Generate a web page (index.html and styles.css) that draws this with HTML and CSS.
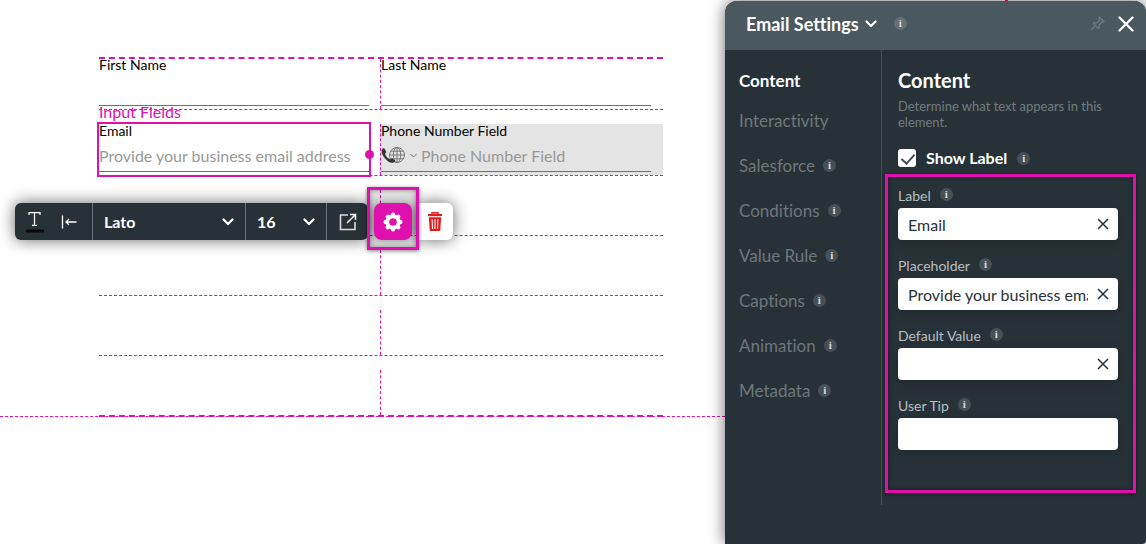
FILE: index.html
```html
<!DOCTYPE html>
<html lang="en">
<head>
<meta charset="utf-8">
<title>Email Settings</title>
<link rel="stylesheet" href="styles.css">
</head>
<body>
<svg class="sprite" aria-hidden="true">
  <symbol id="chevron" viewBox="0 0 12 8"><path d="M1.5 1.5 6 6l4.500-4.500" fill="none" stroke="currentColor" stroke-width="2.200" stroke-linecap="round" stroke-linejoin="round"/></symbol>
  <symbol id="cross" viewBox="0 0 16 16"><path d="M1.500 1.500l13 13M14.500 1.500l-13 13" fill="none" stroke="currentColor" stroke-width="2.400" stroke-linecap="round"/></symbol>
  <symbol id="cross-thin" viewBox="0 0 12 12"><path d="M1 1l10 10M11 1 1 11" fill="none" stroke="currentColor" stroke-width="1.500"/></symbol>
</svg>
<div class="app">
  <main class="canvas">
    <form class="form-grid">
      <div class="row row-first">
        <div class="cell">
          <label for="first">First Name</label>
          <input id="first" class="line-input" type="text">
        </div>
        <div class="cell">
          <label for="last">Last Name</label>
          <input id="last" class="line-input" type="text">
        </div>
      </div>
      <div class="row row-second">
        <span class="section-tag">Input Fields</span>
        <div class="cell selected">
          <label for="mail">Email</label>
          <input id="mail" class="line-input" type="email" placeholder="Provide your business email address">
          <span class="handle"></span>
        </div>
        <div class="cell shaded">
          <label for="phone">Phone Number Field</label>
          <div class="phone">
            <svg class="phone-icon" viewBox="0 0 38 17" aria-hidden="true">
              <g fill="none" stroke="#777" stroke-width="1"><circle cx="16" cy="8" r="7.500"/><ellipse cx="16" cy="8" rx="3.700" ry="7.500"/><path d="M16 .5v15M8.500 8h15M10 4.200h12M10 11.800h12"/></g>
              <path d="M1.200 1.800C2.300.7 3.300.8 4 2l1.200 2.200c.4.800.2 1.500-.7 2.200-.4 2 2.900 5.700 5 5.300.8-.8 1.400-1 2.200-.5l2 1.400c1 .7 1 1.600.1 2.500-1.700 1.600-4.500 1.200-7.500-1.200C2.700 11-1.500 5 1.200 1.800z" fill="#333" stroke="#e4e4e4" stroke-width=".5"/>
              <path d="M29.500 7l3 3 3-3" fill="none" stroke="#777"/>
            </svg>
            <input id="phone" class="line-input" type="tel" placeholder="Phone Number Field">
          </div>
        </div>
      </div>
      <div class="row"><div class="cell"></div><div class="cell"></div></div>
      <div class="row"><div class="cell"></div><div class="cell"></div></div>
      <div class="row"><div class="cell"></div><div class="cell"></div></div>
      <div class="row row-last"><div class="cell"></div><div class="cell"></div></div>
    </form>
    <div class="page-line"></div>

    <div class="toolbar" role="toolbar" aria-label="Text tools">
      <div class="tools">
        <div class="tool-group">
          <button class="tool" type="button" aria-label="Text colour">
            <svg width="20" height="22" viewBox="0 0 20 22"><g fill="none" stroke="#fff" stroke-width="1.200"><path d="M4 4V1.600h11V4M9.500 1.600v12.800M7 14.400h5"/></g><path d="M1 18.500h18v3H1z" fill="#080a0b"/></svg>
          </button>
          <button class="tool" type="button" aria-label="Align left">
            <svg width="16" height="14" viewBox="0 0 16 14"><path d="M1.500.5v13M5 7h10.500M8 4 5 7l3 3" fill="none" stroke="#fff" stroke-width="1.300"/></svg>
          </button>
        </div>
        <div class="picker picker-font">
          <select aria-label="Font"><option>Lato</option></select>
          <svg class="chev"><use href="#chevron"/></svg>
        </div>
        <div class="picker picker-size">
          <select aria-label="Font size"><option>16</option></select>
          <svg class="chev"><use href="#chevron"/></svg>
        </div>
        <button class="tool tool-open" type="button" aria-label="Open">
          <svg width="18" height="18" viewBox="0 0 18 18"><path d="M9 2H1.500v14.500H16V9" fill="none" stroke="#ddd" stroke-width="1.600"/><path d="M8 10l8-8M11 1.500h5.500V7" fill="none" stroke="#fff" stroke-width="1.500"/></svg>
        </button>
      </div>
      <div class="gear-frame">
        <button class="gear" type="button" aria-label="Settings">
          <svg width="20" height="20" viewBox="0 0 20 20"><circle cx="10" cy="10" r="5.600" fill="none" stroke="#fff" stroke-width="4"/><g stroke="#fff" stroke-width="4.400" stroke-linecap="round"><path d="M10 2.700v.8M10 16.500v.8M2.700 10h.8M16.500 10h.8M4.800 4.800l.5.500M14.700 14.700l.5.500M15.200 4.800l-.5.500M5.300 14.700l-.5.500"/></g><circle cx="10" cy="10" r="3.600" fill="#e010ae"/></svg>
        </button>
      </div>
      <button class="trash" type="button" aria-label="Delete">
        <svg width="16" height="20" viewBox="0 0 16 20"><path d="M5 2V.7h6V2" fill="none" stroke="#e02020" stroke-width="1.400"/><path d="M1 2h14v2.200H1z" fill="#e02020"/><path d="M1.800 5.200h12.400L13.200 19H2.800z" fill="#e02020"/><path d="M5.100 7l.4 10M8 7v10M10.900 7l-.4 10" stroke="#fff" stroke-width="1"/></svg>
      </button>
    </div>
  </main>

  <aside class="panel">
    <header class="panel-head">
      <h1>Email Settings</h1>
      <svg class="chev"><use href="#chevron"/></svg>
      <span class="info">i</span>
      <button class="icon-btn pin" type="button" aria-label="Pin">
        <svg width="15" height="15" viewBox="0 0 15 15"><path d="M9.500 1l4.500 4.500-1.200.8-.7-.2-2.900 2.900.2 2.500-1 1L3.500 7.600l1-1 2.500.2L9.900 3.900l-.9-1.600zM5.500 9.500.8 14.200" fill="none" stroke="#6d787e" stroke-width="1.300"/></svg>
      </button>
      <button class="icon-btn" type="button" aria-label="Close"><svg width="16" height="16"><use href="#cross"/></svg></button>
    </header>
    <div class="panel-body">
      <nav class="tabs">
        <a class="current" href="#content">Content</a>
        <a href="#interactivity">Interactivity</a>
        <a href="#salesforce">Salesforce <span class="info">i</span></a>
        <a href="#conditions">Conditions <span class="info">i</span></a>
        <a href="#value-rule">Value Rule <span class="info">i</span></a>
        <a href="#captions">Captions <span class="info">i</span></a>
        <a href="#animation">Animation <span class="info">i</span></a>
        <a href="#metadata">Metadata <span class="info">i</span></a>
      </nav>
      <section class="content" id="content">
        <h2>Content</h2>
        <p>Determine what text appears in this element.</p>
        <div class="check">
          <input id="show" type="checkbox" checked>
          <label for="show">Show Label</label>
          <span class="info">i</span>
        </div>
        <div class="fields">
          <div class="field">
            <div class="field-head"><label for="f-label">Label</label><span class="info">i</span></div>
            <div class="box"><input id="f-label" type="text" value="Email"><button type="button" aria-label="Clear label"><svg width="12" height="12"><use href="#cross-thin"/></svg></button></div>
          </div>
          <div class="field">
            <div class="field-head"><label for="f-place">Placeholder</label><span class="info">i</span></div>
            <div class="box"><input id="f-place" type="text" value="Provide your business email address"><button type="button" aria-label="Clear placeholder"><svg width="12" height="12"><use href="#cross-thin"/></svg></button></div>
          </div>
          <div class="field">
            <div class="field-head"><label for="f-default">Default Value</label><span class="info">i</span></div>
            <div class="box"><input id="f-default" type="text"><button type="button" aria-label="Clear default value"><svg width="12" height="12"><use href="#cross-thin"/></svg></button></div>
          </div>
          <div class="field">
            <div class="field-head"><label for="f-tip">User Tip</label><span class="info">i</span></div>
            <div class="box"><input id="f-tip" type="text"></div>
          </div>
        </div>
      </section>
    </div>
  </aside>
</div>
</body>
</html>
```
FILE: styles.css
```css
:root {
  --pink: #e010ae;
  --dark: #273238;
  --head: #4a585f;
}
* { box-sizing: border-box; }
body {
  margin: 0;
  background: #fff;
  color: #000;
  font-family: Lato, "Liberation Sans", sans-serif;
  font-variant-ligatures: none;
}
button, input, select { font: inherit; color: inherit; }
button { border: 0; padding: 0; background: none; cursor: pointer; }
.sprite { display: none; }
svg { display: block; flex: none; }
.app { display: flex; min-height: 100vh; overflow: hidden; }

/* Form canvas */
.canvas { position: relative; flex: 1; min-width: 0; padding-top: 57px; }
.form-grid {
  display: flex;
  flex-direction: column;
  gap: 14px;
  margin: 0 62px 0 99px;
  border-top: 2px dashed var(--pink);
}
.row {
  position: relative;
  display: grid;
  grid-template-columns: 1fr 1fr;
  min-height: 46px;
  border-bottom: 1px dashed var(--pink);
}
.row-first { min-height: 51px; }
.row-second { min-height: 52px; }
.row-last { border-bottom-width: 2px; min-height: 47px; }
.page-line { margin-top: -1px; border-top: 1px dashed var(--pink); }
.cell {
  display: flex;
  flex-direction: column;
  min-width: 0;
  font-size: 14px;
  line-height: 14px;
}
.row-first .cell { line-height: 12px; }
.cell + .cell { margin-left: -1px; border-left: 1px dashed var(--pink); }
.cell .line-input {
  width: 100%;
  height: 33px;
  padding: 2px 0 0;
  border: 0;
  outline: 0;
  background: none;
  font-size: 16px;
}
.row-first .line-input,
.selected .line-input,
.phone {
  width: auto;
  margin-right: 12px;
  border-bottom: 1px solid #0c8ce9;
}
.row-first .line-input { height: 35px; }
.selected .line-input { height: 34px; }
.line-input::placeholder { color: #999; opacity: 1; }
.selected { position: relative; }
.selected::before {
  content: "";
  position: absolute;
  inset: -2px 10px -2px -2px;
  border: 2px solid var(--pink);
  pointer-events: none;
}
.handle {
  position: absolute;
  right: 7px;
  top: 26px;
  width: 9px;
  height: 9px;
  border-radius: 50%;
  background: var(--pink);
}
.shaded { background: #e4e4e4; }
.phone { display: flex; align-items: center; height: 34px; gap: 2px; }
.phone-icon { width: 38px; height: 17px; margin-top: 2px; }
.section-tag {
  position: absolute;
  left: 0;
  top: -22px;
  font-size: 16px;
  line-height: 20px;
  color: var(--pink);
}

/* Floating toolbar */
.toolbar {
  position: absolute;
  left: 15px;
  top: 187px;
  display: flex;
  align-items: flex-start;
}
.tools {
  display: flex;
  height: 37px;
  margin-top: 16px;
  border-radius: 6px;
  background: var(--dark);
  color: #fff;
  box-shadow: 0 0 16px rgba(0, 0, 0, .6);
}
.tool-group { display: flex; padding: 0 15px 0 10px; gap: 16px; }
.tool { display: flex; align-items: center; }
.picker {
  display: flex;
  align-items: center;
  position: relative;
  border-left: 1px solid #6b757a;
}
.picker select {
  appearance: none;
  width: 100%;
  height: 100%;
  border: 0;
  padding: 0 11px;
  background: none;
  font-size: 16px;
  font-weight: 700;
}
.picker .chev { position: absolute; right: 11px; pointer-events: none; }
.picker-font { width: 153px; }
.picker-size { width: 81px; }
.chev { width: 12px; height: 8px; }
.tool-open { width: 42px; justify-content: center; border-left: 1px solid #6b757a; }
.gear-frame {
  position: relative;
  z-index: 1;
  padding: 13px 4px 7px;
  margin-left: -1px;
  border: 3px solid var(--pink);
  box-shadow: 0 1px 4px rgba(0, 0, 0, .5), inset 0 0 4px rgba(0, 0, 0, .4);
  background: rgba(0, 0, 0, .12);
}
.gear, .trash { display: grid; place-items: center; height: 37px; }
.gear { width: 38px; border-radius: 8px; background: var(--pink); box-shadow: 0 0 8px rgba(0, 0, 0, .4); }
.trash {
  width: 36px;
  margin: 16px 0 0 -2px;
  border-radius: 0 6px 6px 0;
  background: #fff;
  box-shadow: 0 0 16px rgba(0, 0, 0, .6);
}

/* Settings panel */
.panel {
  position: relative;
  display: flex;
  flex-direction: column;
  flex: 0 0 421px;
  min-width: 0;
  margin-top: 1px;
  border-radius: 12px 12px 4px 0;
  background: var(--dark);
  color: #fff;
  box-shadow: 0 0 16px rgba(0, 0, 0, .6);
}
.panel::before {
  content: "";
  position: absolute;
  left: 280px;
  top: -1px;
  width: 3px;
  height: 1px;
  background: #d8002c;
}
.panel-head {
  display: flex;
  align-items: center;
  height: 49px;
  padding: 0 12px 4px 21px;
  border-radius: 12px 12px 0 0;
  background: var(--head);
}
.panel-head h1 { margin: 0 6px 0 0; font-size: 18px; line-height: 24px; }
.panel-head .info { margin-left: 17px; }
.icon-btn { flex: none; }
.pin { margin: 0 13px 0 auto; }
.info {
  flex: none;
  width: 13px;
  height: 13px;
  border-radius: 50%;
  background: #465157;
  color: #d8dcde;
  font: 700 11px/13px "Liberation Serif", serif;
  text-align: center;
}
.panel-head .info { background: #647076; }
.panel-body { display: flex; align-items: flex-start; }
.tabs {
  display: flex;
  flex-direction: column;
  flex: 0 0 157px;
  height: 455px;
  padding: 12px 0 0 14px;
  border-right: 1px solid #465157;
}
.tabs a {
  display: flex;
  align-items: center;
  gap: 8px;
  height: 45px;
  color: #6d777c;
  font-size: 17px;
  text-decoration: none;
}
.tabs a.current { height: 36px; color: #fff; font-weight: 700; }
.content { flex: 1; min-width: 0; padding: 18px 10px 0 16px; }
.content h2 { margin: 0 0 6px; font-size: 20px; line-height: 24px; }
.content p { margin: 0; color: #727c81; font-size: 13px; line-height: 16px; }
.check { display: flex; align-items: center; margin-top: 18px; font-size: 16px; line-height: 20px; font-weight: 700; }
.check label { margin: 0 10px; }
.check input {
  appearance: none;
  width: 18px;
  height: 18px;
  margin: 0;
  border-radius: 3px;
  background: #fff;
}
.check input:checked::before {
  content: "";
  display: block;
  width: 6px;
  height: 11px;
  margin: 2px 0 0 6px;
  border: solid #465157;
  border-width: 0 2px 2px 0;
  transform: rotate(42deg);
}
.fields {
  display: flex;
  flex-direction: column;
  gap: 18px;
  margin: 6px 0 0 -13px;
  padding: 11px 15px 40px 10px;
  border: 3px solid var(--pink);
  box-shadow: 0 1px 4px rgba(0, 0, 0, .5), inset 0 0 4px rgba(0, 0, 0, .5);
}
.field-head { display: flex; gap: 9px; height: 20px; color: #b9bec1; font-size: 14px; line-height: 16px; }
.box {
  display: flex;
  align-items: center;
  height: 32px;
  padding: 0 9px 0 10px;
  border-radius: 4px;
  background: #fff;
  color: var(--dark);
  box-shadow: 0 4px 12px rgba(0, 0, 0, .2);
}
.box input { flex: 1; min-width: 0; height: 32px; padding: 0; border: 0; outline: 0; background: none; font-size: 16px; }
.box button { margin-left: 9px; }
```
